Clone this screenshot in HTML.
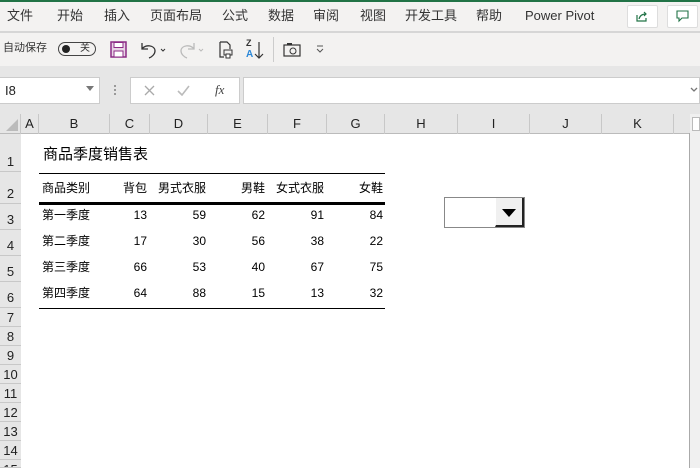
<!DOCTYPE html>
<html><head><meta charset="utf-8">
<style>
*{margin:0;padding:0;box-sizing:border-box}
html,body{width:700px;height:468px;overflow:hidden}
body{background:#fff;font-family:"Liberation Sans","Noto Sans CJK SC",sans-serif;position:relative;color:#222}
.a{position:absolute}
.menu span{position:absolute;top:7px;font-size:13px;line-height:18px;color:#333}
.t{position:absolute;font-size:12px;line-height:14px;height:14px;color:#000;white-space:nowrap}
.r{text-align:right}
.ch{position:absolute;top:114px;height:20px;font-size:13px;color:#222;text-align:center;line-height:20px;border-right:1px solid #c8c8c8}
.rh{position:absolute;left:0;width:21px;font-size:13px;line-height:16px;color:#222;text-align:center;border-bottom:1px solid #c8c8c8;background:#e6e6e6}
</style></head><body>
<div class="a" style="left:0;top:0;width:700px;height:66px;background:#f3f2f1"></div>
<div class="a" style="left:0;top:0;width:700px;height:2px;background:#217346"></div>
<div class="menu">
<span style="left:7px">文件</span><span style="left:57px">开始</span><span style="left:104px">插入</span><span style="left:150px">页面布局</span><span style="left:222px">公式</span><span style="left:268px">数据</span><span style="left:313px">审阅</span><span style="left:360px">视图</span><span style="left:405px">开发工具</span><span style="left:476px">帮助</span><span style="left:525px;top:7px;line-height:18px">Power Pivot</span>
</div>
<div class="a" style="left:627px;top:5px;width:31px;height:23px;background:#fff;border:1px solid #ddd;border-radius:2px"></div>
<svg class="a" style="left:634px;top:9px" width="16" height="14" viewBox="0 0 16 14"><path d="M3 6v6h9V9" fill="none" stroke="#217346" stroke-width="1.2"/><path d="M5 10c1-4 4-5 7-5M10 3l2 2-2 2" fill="none" stroke="#217346" stroke-width="1.2"/></svg>
<div class="a" style="left:667px;top:5px;width:31px;height:23px;background:#fff;border:1px solid #ddd;border-radius:2px"></div>
<svg class="a" style="left:675px;top:9px" width="16" height="14"><path d="M2 2h11v7H7l-3 3V9H2z" fill="none" stroke="#217346" stroke-width="1.1"/></svg>
<div class="a" style="left:0;top:31px;width:700px;height:2px;background:#d6d6d6"></div>
<span class="a" style="left:3px;top:41px;font-size:11px;line-height:15px;color:#333">自动保存</span>
<div class="a" style="left:58px;top:42px;width:38px;height:14px;border:1px solid #444;border-radius:8px"></div>
<div class="a" style="left:62px;top:45px;width:8px;height:8px;border-radius:50%;background:#222"></div>
<span class="a" style="left:80px;top:42px;font-size:10px;line-height:13px;color:#333">关</span>
<svg class="a" style="left:110px;top:41px" width="17" height="17"><rect x="1" y="1" width="15" height="15" fill="#e8d4e6" stroke="#8b2b85" stroke-width="1.5"/><rect x="4" y="1.5" width="9" height="5" fill="#fff" stroke="#8b2b85"/><rect x="4" y="10" width="9" height="6" fill="#fff" stroke="#8b2b85"/></svg>
<svg class="a" style="left:138px;top:40px" width="30" height="20"><path d="M4 3v6h6M4 9c3-5 13-4 13 2 0 3-3 6-6 7" fill="none" stroke="#333" stroke-width="1.3"/><path d="M23 9l2 2 2-2" fill="none" stroke="#333"/></svg>
<svg class="a" style="left:178px;top:40px" width="30" height="20"><path d="M16 3v6h-6M16 9c-3-5-13-4-13 2 0 3 3 6 6 7" fill="none" stroke="#bbb" stroke-width="1.3"/><path d="M21 9l2 2 2-2" fill="none" stroke="#bbb"/></svg>
<svg class="a" style="left:218px;top:40px" width="16" height="20"><path d="M2 2h7l3 3v4M2 2v15h4" fill="none" stroke="#333" stroke-width="1.2"/><rect x="6" y="10" width="8" height="5" fill="none" stroke="#333"/><rect x="8" y="14" width="4" height="4" fill="#fff" stroke="#333"/></svg>
<span class="a" style="left:246px;top:38px;font-size:9px;line-height:10px;font-weight:bold;color:#333">Z</span>
<span class="a" style="left:246px;top:49px;font-size:10px;line-height:11px;font-weight:bold;color:#2b88d8">A</span>
<svg class="a" style="left:254px;top:40px" width="10" height="20"><path d="M5 2v16M1 14l4 4 4-4" fill="none" stroke="#333" stroke-width="1.2"/></svg>
<div class="a" style="left:273px;top:37px;width:1px;height:25px;background:#ccc"></div>
<svg class="a" style="left:283px;top:42px" width="18" height="15"><rect x="1" y="3" width="16" height="11" fill="none" stroke="#333" stroke-width="1.2"/><rect x="4" y="1" width="5" height="2" fill="#333"/><circle cx="10" cy="9" r="3" fill="none" stroke="#333"/></svg>
<svg class="a" style="left:315px;top:45px" width="10" height="8"><path d="M2 1h6M2 4l3 3 3-3" fill="none" stroke="#555"/></svg>
<div class="a" style="left:0;top:66px;width:700px;height:48px;background:#e6e6e6"></div>
<div class="a" style="left:0;top:77px;width:100px;height:27px;background:#fff;border:1px solid #ccc;border-left:none"></div>
<span class="a" style="left:5px;top:83px;font-size:13px;line-height:15px;color:#222">I8</span>
<svg class="a" style="left:86px;top:86px" width="8" height="5"><path d="M0 0h8L4 5z" fill="#777"/></svg>
<div class="a" style="left:114px;top:85px;width:2px;height:2px;background:#999;box-shadow:0 4px #999,0 8px #999"></div>
<div class="a" style="left:130px;top:77px;width:110px;height:27px;background:#fff;border:1px solid #ccc"></div>
<svg class="a" style="left:144px;top:85px" width="11" height="11"><path d="M1 1l9 9M10 1l-9 9" stroke="#aaa" stroke-width="1.3"/></svg>
<svg class="a" style="left:177px;top:85px" width="13" height="11"><path d="M1 6l4 4 7-9" fill="none" stroke="#bbb" stroke-width="1.6"/></svg>
<span class="a" style="left:215px;top:82px;font-size:13px;line-height:15px;font-style:italic;font-family:'Liberation Serif',serif;color:#444">fx</span>
<div class="a" style="left:243px;top:77px;width:457px;height:27px;background:#fff;border:1px solid #ccc"></div>
<svg class="a" style="left:690px;top:87px" width="8" height="6"><path d="M1 1l3 3 3-3" fill="none" stroke="#777" stroke-width="1.3"/></svg>
<div class="a" style="left:0;top:114px;width:700px;height:20px;background:#e6e6e6;border-bottom:1px solid #bbb"></div>
<svg class="a" style="left:6px;top:119px" width="13" height="13"><path d="M12 0v12H0z" fill="#bbb"/></svg>
<div class="ch" style="left:0;width:21px"></div>
<div class="ch" style="left:21px;width:18px">A</div>
<div class="ch" style="left:39px;width:71px">B</div>
<div class="ch" style="left:110px;width:40px">C</div>
<div class="ch" style="left:150px;width:58px">D</div>
<div class="ch" style="left:208px;width:60px">E</div>
<div class="ch" style="left:268px;width:59px">F</div>
<div class="ch" style="left:327px;width:58px">G</div>
<div class="ch" style="left:385px;width:73px">H</div>
<div class="ch" style="left:458px;width:72px">I</div>
<div class="ch" style="left:530px;width:72px">J</div>
<div class="ch" style="left:602px;width:72px">K</div>
<div class="a" style="left:0;top:134px;width:21px;height:334px;background:#e6e6e6;border-right:1px solid #bbb"></div>
<div class="rh" style="top:134px;height:38px;padding-top:20px">1</div>
<div class="rh" style="top:172px;height:32px;padding-top:14px">2</div>
<div class="rh" style="top:204px;height:26px;padding-top:8px">3</div>
<div class="rh" style="top:230px;height:26px;padding-top:8px">4</div>
<div class="rh" style="top:256px;height:26px;padding-top:8px">5</div>
<div class="rh" style="top:282px;height:26px;padding-top:8px">6</div>
<div class="rh" style="top:308px;height:19px;line-height:19px">7</div>
<div class="rh" style="top:327px;height:19px;line-height:19px">8</div>
<div class="rh" style="top:346px;height:19px;line-height:19px">9</div>
<div class="rh" style="top:365px;height:19px;line-height:19px">10</div>
<div class="rh" style="top:384px;height:19px;line-height:19px">11</div>
<div class="rh" style="top:403px;height:19px;line-height:19px">12</div>
<div class="rh" style="top:422px;height:19px;line-height:19px">13</div>
<div class="rh" style="top:441px;height:19px;line-height:19px">14</div>
<div class="rh" style="top:460px;height:8px;line-height:19px;overflow:hidden">15</div>
<div class="a" style="left:689px;top:133px;width:1px;height:335px;background:#aaa"></div>
<div class="a" style="left:690px;top:114px;width:10px;height:354px;background:#f0f0f0"></div>
<div class="a" style="left:692px;top:117px;width:8px;height:14px;background:#fff;border:1px solid #bbb"></div>
<span class="a" style="left:43px;top:146px;font-size:15px;line-height:18px;color:#000">商品季度销售表</span>
<div class="a" style="left:39px;top:173px;width:346px;height:1px;background:#000"></div>
<div class="a" style="left:39px;top:202px;width:346px;height:3px;background:#000"></div>
<div class="a" style="left:39px;top:308px;width:346px;height:1px;background:#000"></div>
<span class="t" style="left:42px;top:181px">商品类别</span>
<span class="t r" style="left:110px;width:37px;top:181px">背包</span>
<span class="t" style="left:158px;top:181px">男式衣服</span>
<span class="t r" style="left:208px;width:57px;top:181px">男鞋</span>
<span class="t" style="left:276px;top:181px">女式衣服</span>
<span class="t r" style="left:327px;width:56px;top:181px">女鞋</span>
<span class="t" style="left:42px;top:208px">第一季度</span>
<span class="t r" style="left:110px;width:37px;top:208px">13</span><span class="t r" style="left:150px;width:56px;top:208px">59</span><span class="t r" style="left:208px;width:57px;top:208px">62</span><span class="t r" style="left:268px;width:56px;top:208px">91</span><span class="t r" style="left:327px;width:56px;top:208px">84</span>
<span class="t" style="left:42px;top:234px">第二季度</span>
<span class="t r" style="left:110px;width:37px;top:234px">17</span><span class="t r" style="left:150px;width:56px;top:234px">30</span><span class="t r" style="left:208px;width:57px;top:234px">56</span><span class="t r" style="left:268px;width:56px;top:234px">38</span><span class="t r" style="left:327px;width:56px;top:234px">22</span>
<span class="t" style="left:42px;top:260px">第三季度</span>
<span class="t r" style="left:110px;width:37px;top:260px">66</span><span class="t r" style="left:150px;width:56px;top:260px">53</span><span class="t r" style="left:208px;width:57px;top:260px">40</span><span class="t r" style="left:268px;width:56px;top:260px">67</span><span class="t r" style="left:327px;width:56px;top:260px">75</span>
<span class="t" style="left:42px;top:286px">第四季度</span>
<span class="t r" style="left:110px;width:37px;top:286px">64</span><span class="t r" style="left:150px;width:56px;top:286px">88</span><span class="t r" style="left:208px;width:57px;top:286px">15</span><span class="t r" style="left:268px;width:56px;top:286px">13</span><span class="t r" style="left:327px;width:56px;top:286px">32</span>
<div class="a" style="left:444px;top:197px;width:81px;height:31px;background:#fff;border:1px solid #888"></div>
<div class="a" style="left:495px;top:198px;width:29px;height:29px;background:#f0f0f0;border-right:2px solid #222;border-bottom:2px solid #222;border-left:1px solid #fff"></div>
<svg class="a" style="left:502px;top:209px" width="14" height="8"><path d="M0 0h14L7 8z" fill="#000"/></svg>
</body></html>
